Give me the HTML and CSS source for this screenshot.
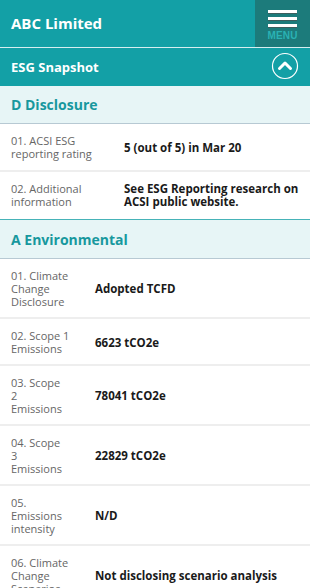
FILE: index.html
```html
<!DOCTYPE html>
<html lang="en">
<head>
  <meta charset="UTF-8" />
  <meta name="viewport" content="width=device-width, initial-scale=1.0" />
  <title>ABC Limited - ESG Snapshot</title>
  <link rel="stylesheet" href="styles.css">
</head>
<body>
<header class="topbar">
  <h1 class="company">ABC Limited</h1>
  <button class="menu-btn">
    <span class="burger"><i></i><i></i><i></i></span>
    <span class="menu-label">MENU</span>
  </button>
</header>

<div class="snapshot-bar">
  <h2>ESG Snapshot</h2>
  <svg class="toggle" width="28" height="28" viewBox="0 0 28 28">
    <circle cx="14" cy="14" r="12.5" fill="none" stroke="#fff" stroke-width="1.2" />
    <path d="M8.5 16.5 L14 11 L19.5 16.5" fill="none" stroke="#fff" stroke-width="3" stroke-linecap="round" stroke-linejoin="round" />
  </svg>
</div>

<section class="group group-d">
  <h3 class="group-title">D Disclosure</h3>
  <div class="row">
    <div class="label">01. ACSI ESG reporting rating</div>
    <div class="value">5 (out of 5) in Mar 20</div>
  </div>
  <div class="row">
    <div class="label">02. Additional information</div>
    <div class="value">See ESG Reporting research on ACSI public website.</div>
  </div>
</section>

<section class="group group-a">
  <h3 class="group-title">A Environmental</h3>
  <div class="row">
    <div class="label">01. Climate Change Disclosure</div>
    <div class="value">Adopted TCFD</div>
  </div>
  <div class="row">
    <div class="label">02. Scope 1 Emissions</div>
    <div class="value">6623 tCO2e</div>
  </div>
  <div class="row">
    <div class="label"><span class="line">03. Scope</span> 2 Emissions</div>
    <div class="value">78041 tCO2e</div>
  </div>
  <div class="row">
    <div class="label"><span class="line">04. Scope</span> 3 Emissions</div>
    <div class="value">22829 tCO2e</div>
  </div>
  <div class="row">
    <div class="label">05. Emissions intensity</div>
    <div class="value">N/D</div>
  </div>
  <div class="row">
    <div class="label">06. Climate Change Scenarios</div>
    <div class="value">Not disclosing scenario analysis</div>
  </div>
</section>
</body>
</html>
```

FILE: styles.css
```css
* { margin: 0; padding: 0; box-sizing: border-box; }
body {
  font-family: 'Open Sans', 'Liberation Sans', sans-serif;
  background: #fff;
  color: #1a1a1a;
}

.topbar {
  display: flex;
  height: 48px;
  background: #13a0a6;
  border-bottom: 1px solid #d6eef0;
}
.company {
  flex: 1;
  display: flex;
  align-items: center;
  padding-left: 11px;
  padding-bottom: 2px;
  font-size: 15px;
  font-weight: 700;
  color: #fff;
}
.menu-btn {
  width: 55px;
  background: #1c7b7b;
  border: none;
  display: flex;
  flex-direction: column;
  align-items: center;
  padding-top: 10px;
  cursor: pointer;
}
.burger {
  display: flex;
  flex-direction: column;
  gap: 4px;
}
.burger i {
  display: block;
  width: 29px;
  height: 3px;
  background: #fff;
  box-shadow: 0 1px 0 rgba(120, 40, 40, 0.35);
}
.menu-label {
  margin-top: 3px;
  font-size: 10px;
  font-weight: 600;
  line-height: 12px;
  color: #2ab2b4;
  letter-spacing: 0.2px;
}

.snapshot-bar {
  display: flex;
  align-items: center;
  justify-content: space-between;
  height: 38px;
  padding: 0 11px;
  background: #13a0a6;
}
.snapshot-bar h2 {
  font-size: 13px;
  font-weight: 700;
  color: #fff;
}
.toggle { display: block; margin-top: -2px; }

.group-title {
  height: 38px;
  display: flex;
  align-items: center;
  padding-left: 11px;
  background: #e7f5f6;
  border-bottom: 1px solid #b7c9d3;
  font-size: 14px;
  font-weight: 700;
  color: #17989e;
}
.group-a .group-title { border-top: 1px solid #46b3b8; height: 40px; }

.row {
  display: flex;
  align-items: center;
  padding: 10px 11px 9px;
  border-bottom: 2px solid #eeeeee;
}
.group-d .row { padding-bottom: 10px; }
.group-d .row:last-child { border-bottom: 1px solid #fff; }
.label {
  flex: none;
  font-size: 11px;
  line-height: 13px;
  color: #666;
}
.label .line { display: block; }
.value {
  font-size: 11.5px;
  font-weight: 700;
  line-height: 13px;
  color: #1a1a1a;
}
.group-d .label { width: 100px; margin-right: 13px; }
.group-a .label { width: 60px; margin-right: 24px; }
```
